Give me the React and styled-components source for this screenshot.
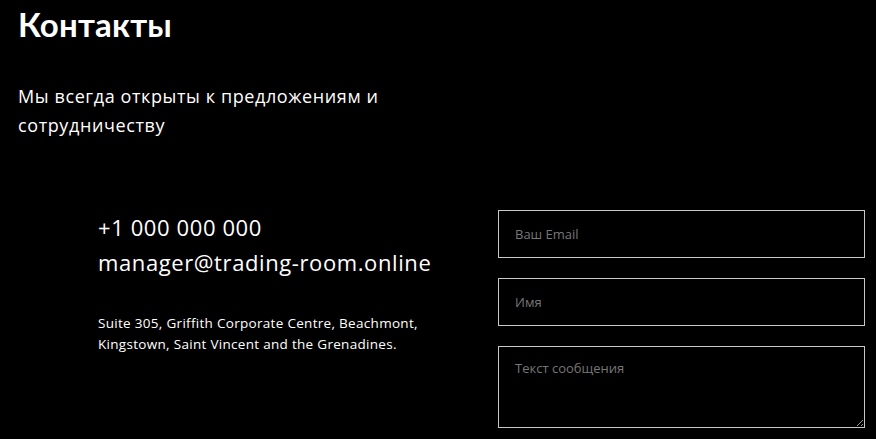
import React from 'react';
import styled, { createGlobalStyle } from 'styled-components';

const Global = createGlobalStyle`
  body {
    margin: 0;
    background: #000;
    color: #fff;
    font-family: 'Open Sans', 'Lato', sans-serif;
  }
`;

const Page = styled.section`
  padding: 4px 11px 40px 18px;
`;

const Title = styled.h1`
  margin: 0;
  font-family: 'Lato', sans-serif;
  font-size: 33px;
  font-weight: 700;
  line-height: 40px;
  letter-spacing: 0.2px;
`;

const Lead = styled.p`
  margin: 38px 0 0;
  font-size: 18px;
  line-height: 29px;
  letter-spacing: 0.6px;
  max-width: 400px;
`;

const Body = styled.div`
  display: flex;
  margin-top: 70px;
  padding-left: 80px;
`;

const Info = styled.div`
  width: 400px;
`;

const Line = styled.div`
  font-size: 22px;
  line-height: 35px;
  font-weight: 400;
  letter-spacing: 0.6px;
`;

const Address = styled.p`
  margin: 33px 0 0;
  font-size: 13.5px;
  line-height: 21px;
  letter-spacing: 0.3px;
  max-width: 340px;
`;

const Form = styled.form`
  display: flex;
  flex-direction: column;
  gap: 20px;
  width: 367px;
`;

const fieldCss = `
  box-sizing: border-box;
  width: 100%;
  background: #000;
  border: 1px solid #c8c8c8;
  color: #fff;
  font-family: 'Open Sans', sans-serif;
  font-size: 13px;
  padding: 0 16px;
  outline: none;
  &::placeholder { color: #777; }
`;

const Input = styled.input`
  ${fieldCss}
  height: 48px;
`;

const Area = styled.textarea`
  ${fieldCss}
  height: 82px;
  padding-top: 12px;
  resize: vertical;
  display: block;
`;

export default function App() {
  return (
    <>
      <Global />
      <Page>
        <Title>Контакты</Title>
        <Lead>Мы всегда открыты к предложениям и сотрудничеству</Lead>
        <Body>
          <Info>
            <Line>+1 000 000 000</Line>
            <Line>manager@trading-room.online</Line>
            <Address>
              Suite 305, Griffith Corporate Centre, Beachmont, Kingstown, Saint Vincent and the Grenadines.
            </Address>
          </Info>
          <Form>
            <Input placeholder="Ваш Email" />
            <Input placeholder="Имя" />
            <Area placeholder="Текст сообщения" />
          </Form>
        </Body>
      </Page>
    </>
  );
}
